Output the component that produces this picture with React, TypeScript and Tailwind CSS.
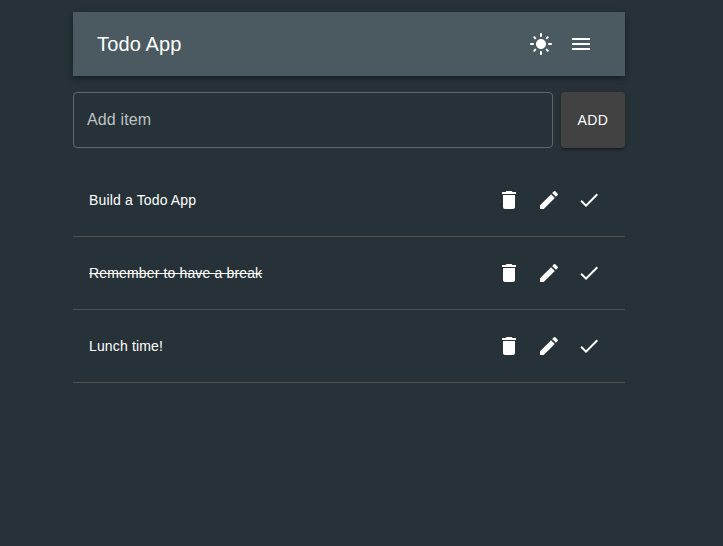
import React from "react";

const paths = {
  sun: "M12 7c-2.76 0-5 2.24-5 5s2.24 5 5 5 5-2.24 5-5-2.24-5-5-5zM2 13h2c.55 0 1-.45 1-1s-.45-1-1-1H2c-.55 0-1 .45-1 1s.45 1 1 1zm18 0h2c.55 0 1-.45 1-1s-.45-1-1-1h-2c-.55 0-1 .45-1 1s.45 1 1 1zM11 2v2c0 .55.45 1 1 1s1-.45 1-1V2c0-.55-.45-1-1-1s-1 .45-1 1zm0 18v2c0 .55.45 1 1 1s1-.45 1-1v-2c0-.55-.45-1-1-1s-1 .45-1 1zM5.99 4.58a.996.996 0 0 0-1.41 0 .996.996 0 0 0 0 1.41l1.06 1.06c.39.39 1.03.39 1.41 0s.39-1.03 0-1.41L5.99 4.58zm12.37 12.37a.996.996 0 0 0-1.41 0 .996.996 0 0 0 0 1.41l1.06 1.06c.39.39 1.03.39 1.41 0a.996.996 0 0 0 0-1.41l-1.06-1.06zm1.06-10.96a.996.996 0 0 0 0-1.41.996.996 0 0 0-1.41 0l-1.06 1.06c-.39.39-.39 1.03 0 1.41s1.03.39 1.41 0l1.06-1.06zM7.05 18.36a.996.996 0 0 0 0-1.41.996.996 0 0 0-1.41 0l-1.06 1.06c-.39.39-.39 1.03 0 1.41s1.03.39 1.41 0l1.06-1.06z",
  menu: "M3 18h18v-2H3v2zm0-5h18v-2H3v2zm0-7v2h18V6H3z",
  trash: "M6 19c0 1.1.9 2 2 2h8c1.1 0 2-.9 2-2V7H6v12zM19 4h-3.5l-1-1h-5l-1 1H5v2h14V4z",
  edit: "M3 17.25V21h3.75L17.81 9.94l-3.75-3.75L3 17.25zM20.71 7.04c.39-.39.39-1.02 0-1.41l-2.34-2.34a.9959.9959 0 0 0-1.41 0l-1.83 1.83 3.75 3.75 1.83-1.83z",
  check: "M9 16.17 4.83 12l-1.42 1.41L9 19 21 7l-1.41-1.41z",
};

function Icon({ name }: { name: keyof typeof paths }) {
  return (
    <svg viewBox="0 0 24 24" className="size-6 fill-current" aria-hidden="true">
      <path d={paths[name]} />
    </svg>
  );
}

const items = [
  { text: "Build a Todo App", done: false },
  { text: "Remember to have a break", done: true },
  { text: "Lunch time!", done: false },
];

export default function App() {
  return (
    <div className="min-h-screen bg-[#263238] pt-3 font-['Liberation_Sans',Arial,sans-serif] text-white">
      <main className="ml-[73px] w-[552px]">
        <header className="flex h-16 items-center justify-between bg-[#4a5a60] pr-8 pl-6 shadow-[0px_2px_4px_-1px_rgba(0,0,0,0.2),0px_4px_5px_0px_rgba(0,0,0,0.14),0px_1px_10px_0px_rgba(0,0,0,0.12)]">
          <h1 className="text-xl tracking-[0.0075em]">Todo App</h1>
          <div className="flex gap-4">
            <button aria-label="Theme"><Icon name="sun" /></button>
            <button aria-label="Menu"><Icon name="menu" /></button>
          </div>
        </header>
        <form className="mt-4 flex gap-2">
          <input
            placeholder="Add item"
            className="h-14 w-[480px] rounded border border-[#5c656a] bg-transparent px-[13px] text-base tracking-[0.00938em] placeholder:text-[#bec1c3]"
          />
          <button type="button" className="h-14 w-16 rounded bg-[#424242] text-sm tracking-[0.02857em] shadow-[0px_3px_1px_-2px_rgba(0,0,0,0.2),0px_2px_2px_0px_rgba(0,0,0,0.14),0px_1px_5px_0px_rgba(0,0,0,0.12)]">
            ADD
          </button>
        </form>
        <ul className="mt-4">
          {items.map((item) => (
            <li key={item.text} className="flex h-[73px] items-center justify-between border-b border-[#515151] pr-6 pl-4 text-sm tracking-[0.01071em]">
              <span className={item.done ? "line-through" : ""}>{item.text}</span>
              <div className="flex gap-4">
                <button aria-label="Delete"><Icon name="trash" /></button>
                <button aria-label="Edit"><Icon name="edit" /></button>
                <button aria-label="Done"><Icon name="check" /></button>
              </div>
            </li>
          ))}
        </ul>
      </main>
    </div>
  );
}
